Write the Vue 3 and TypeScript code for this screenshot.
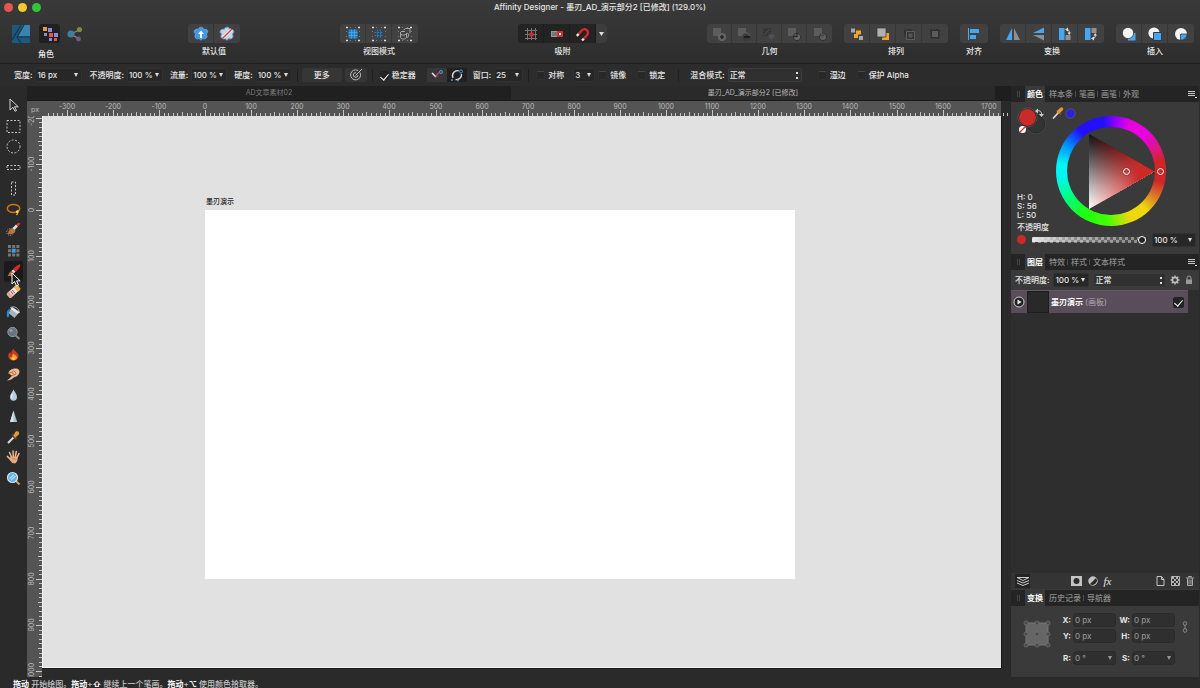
<script setup lang="ts">
import { ref } from 'vue'

interface Tool { name: string; icon: string; active?: boolean }
interface Group { label: string; cls: string; buttons: { name: string; icon: string }[] }

const corners = '<path d="M2 2.500h2M14 2.500h2M2 15.500h2M14 15.500h2" stroke="#ddd" stroke-width="1.400"/><path d="M6 2.500h1M11 2.500h1M6 15.500h1M11 15.500h1M2.500 6v1M15.500 6v1M2.500 11v1M15.500 11v1" stroke="#8a8a8a" stroke-width=".8"/>'
const flower = '<path d="M9 2.200c1.500 0 2.300 1 2.600 2.100 1.200-.2 3.700 0 4.100 1.700.4 1.400-.5 2.300-1.400 3 .7 1.100 1.200 3-.2 4.200-1.200 1-2.400.7-3.500.2-.5 1-1 1.700-1.600 1.700s-1.200-.6-1.700-1.700c-1.100.5-2.300.8-3.500-.2-1.300-1.200-.9-3.100-.2-4.200-.9-.7-1.800-1.600-1.400-3 .5-1.700 2.900-1.900 4.200-1.700C6.700 3.200 7.500 2.200 9 2.200z"'
const geo = (s: string) => `<path d="M3 3h8v8H3z" fill="#5c5c5c"/>${s}`

const icons: Record<string, string> = {
  defAsset: `${flower} fill="#3f97e6" stroke="#69b5f2" stroke-width=".7"/><path d="M9 5.500L12 9h-2v4H8V9H6z" fill="#fff"/>`,
  defClear: `${flower} fill="#c9d3dd" stroke="#5fa8e4" stroke-width="1"/><path d="M5 13L13.500 4.500" stroke="#fff" stroke-width="3"/><path d="M4.500 13.500L14 4" stroke="#d73533" stroke-width="1.500"/>`,
  vm1: `${corners}<path d="M4.500 4.500h9v9h-9z" fill="#277fc4"/><path d="M4.500 7.500h9M4.500 10.500h9M7.500 4.500v9M10.500 4.500v9" stroke="#4fb0ee" stroke-width=".7"/>`,
  vm2: `${corners}<path d="M4.500 4.500h9v9h-9z" fill="#2c485e"/><path d="M4.500 7.500h9M4.500 10.500h9M7.500 4.500v9M10.500 4.500v9" stroke="#4886b4" stroke-width=".7" stroke-dasharray="2 1"/>`,
  vm3: `${corners}<g fill="none" stroke="#a5a5a5" stroke-width="1"><path d="M5 6.500h4M4.500 7v5.500c1 2 5 2 6 0V8M10.500 8.500c3-1 3 4 0 4M7.500 5l2-1.500h4.500v4l-1 1M5 9.500c2 1 4 1 5-.5"/></g>`,
  sn1: '<path d="M3 5.500h12M3 9.500h12M3 13.500h12M5.500 3v12M9.500 3v12M13.500 3v12" stroke="#777" stroke-width="1"/><path d="M7.500 7.500h4v4h-4z" fill="#d52730"/>',
  sn2: '<path d="M3 6h7v6H3z" fill="#999"/><path d="M4 8h5M4 10h5" stroke="#555"/><path d="M9 6h6v6H9z" fill="#d52d35"/><path d="M11 8h2v2h-2z" fill="#fff"/>',
  sn3: '<g transform="rotate(42 9 9)" fill="none"><path d="M5.700 12.500V7a3.500 3.500 0 0 1 7 0v5.500" stroke="#d7282f" stroke-width="2.400"/><path d="M5.700 12v2.500M12.700 12v2.500" stroke="#eee" stroke-width="2.400"/></g>',
  g1: geo('<circle cx="12" cy="12" r="4" fill="#646464"/><path d="M10 12h4M12 10v4" stroke="#262626" stroke-width="1.600"/>'),
  g2: geo('<circle cx="11.500" cy="12" r="4" fill="#3b3b3b"/><path d="M9 12h6" stroke="#1e1e1e" stroke-width="2"/><path d="M10 8a4 4 0 0 1 5 3" stroke="#666" fill="none"/>'),
  g3: '<path d="M3 3h8v8H3z" fill="#37373a"/><path d="M8 11a4 4 0 0 1 7 0l-4 4z" fill="#4d5054"/><path d="M4 10l6-6" stroke="#505052"/>',
  g4: geo('<circle cx="12" cy="12" r="3.700" fill="#686868" stroke="#303030"/><path d="M8 11.500h4V8" stroke="#292929" fill="none" stroke-width="1.300"/>'),
  g5: geo('<circle cx="12" cy="12" r="3.700" fill="#606060" stroke="#333"/><path d="M9.500 9.500h3v3h-3z" fill="#303030"/><path d="M11 8v4M9 12h4" stroke="#777" stroke-width=".7"/>'),
  a1: '<path d="M3 3.500h4v4H3zM11 11h4v4h-4z" fill="#a7a7a7"/><path d="M8 5.500h5v4h-3v3.500H6V9h2z" fill="#f4a429"/>',
  a2: '<path d="M9 8h6v7H8z" fill="#f1a42d"/><path d="M3 3h9v9H3z" fill="#b0b0b0" stroke="#333" stroke-width=".7"/>',
  a3: '<path d="M4 4h8v8H4z" fill="#343434"/><path d="M6.500 6.500h8v8h-8z" fill="#343434" stroke="#5e5e5e"/><path d="M8.500 8.500h4v4h-4z" fill="#555"/>',
  a4: '<path d="M4.500 4.500h9v9h-9z" fill="#2f2f2f"/><path d="M6 6h6v6H6z" fill="#5b5b5b"/>',
  al: '<path d="M3.500 3v12" stroke="#5ba6e2" stroke-width="1"/><path d="M5 4h9v4H5zM5 10h6v4H5z" fill="#49a6ee"/>',
  t1: '<path d="M8 3v12H2z" fill="#48a5ef"/><path d="M10 3v12h6z" fill="#8e8e8e"/>',
  t2: '<path d="M14 2.500V8H3z" fill="#48a5ef"/><path d="M14 15.500V10H3z" fill="#8e8e8e"/>',
  t3: '<path d="M3 3h5.500v12H3z" fill="#48a5ef"/><path d="M9.500 10h5v5h-5z" fill="#929292"/><path d="M10 4.500c3-.5 3.500 1.500 3.200 4" fill="none" stroke="#ddd"/><path d="M9 4.500L12 2.500v4zM11.500 7.500h3.500l-1.800 2.500z" fill="#ddd"/>',
  t4: '<path d="M3 3h5.500v12H3z" fill="#48a5ef"/><path d="M9.500 3h5v5h-5z" fill="#929292"/><path d="M10 13.500c3 .5 3.500-1.500 3.200-4" fill="none" stroke="#ddd"/><path d="M9 13.500l3 2v-4zM11.500 10.500h3.500L13.200 8z" fill="#ddd"/>',
  i1: '<path d="M8 8h7.500v7.500H8z" fill="#48a5ef"/><circle cx="8" cy="8" r="5.600" fill="#f4f4f4" stroke="#333" stroke-width=".7"/>',
  i2: '<circle cx="8" cy="8" r="5.600" fill="#f4f4f4"/><path d="M7.500 7.500h8v8h-8z" fill="#48a5ef" stroke="#2e3b47" stroke-width="1"/>',
  i3: '<circle cx="9" cy="9" r="6" fill="#f4f4f4"/><path d="M8.500 9h6.500a6 6 0 0 1-6.500 6z" fill="#48a5ef" stroke="#2e3b47" stroke-width=".8"/>',

  arrow: '<path d="M6 3v11l3-2.700 2 4 1.500-.8-2-3.700h3.800z" fill="#2c2c2c" stroke="#d5d5d5"/>',
  rectSel: '<path d="M3 3.500h13v12H3z" fill="none" stroke="#c4c4c4" stroke-dasharray="2 1.500"/>',
  ovalSel: '<circle cx="9.500" cy="9.500" r="6.500" fill="none" stroke="#c4c4c4" stroke-dasharray="2 1.500"/>',
  rowSel: '<path d="M3 7.500h13v4H3z" fill="none" stroke="#c4c4c4" stroke-dasharray="2 1.500"/>',
  colSel: '<path d="M7.500 3h4v13h-4z" fill="none" stroke="#c4c4c4" stroke-dasharray="2 1.500"/>',
  lasso: '<ellipse cx="9.500" cy="8.500" rx="6.200" ry="4" fill="none" stroke="#cc751c" stroke-width="1.500"/><path d="M12 12c2.500 0 2 2.500 0 2.500" fill="none" stroke="#e6a42a" stroke-width="1.300"/><circle cx="13.500" cy="11.500" r="1.300" fill="#ffe95a"/>',
  selBrush: '<circle cx="6" cy="12" r="3.300" fill="none" stroke="#aaa" stroke-dasharray="1 1"/><path d="M4 14c0-3 2-5.500 5-6l2.500 2.500c-.5 3-3.500 4-7.500 3.500z" fill="#b8753c"/><path d="M8.500 8L12 4.500 14 6.500 10.500 10z" fill="#dedede"/><path d="M12 4.500l3-2 1.300 1.300-2.300 2.700z" fill="#e23a32"/>',
  grid: '<g fill="#777"><path d="M4 4h3v3H4zM8.200 4h3v3h-3zM12.400 4h3v3h-3zM4 8.200h3v3H4zM12.400 8.200h3v3h-3zM4 12.400h3v3H4zM8.200 12.400h3v3h-3zM12.400 12.400h3v3h-3z"/></g><path d="M7.700 7.700h4v4h-4z" fill="#36a0f3"/>',
  brush: '<path d="M3.500 14c1-1 1.500-4 4-5l2.500 2.500c-1 2.500-4 2.800-6.500 2.500z" fill="#b56a3a"/><path d="M7.500 9l1.800-1.700 2.300 2.300-1.700 1.700z" fill="#ddd"/><path d="M9 7C11 5 13 3.300 15.500 2.200c1.300.5 1 1.800.3 2.900-1 1.600-2.400 3.300-3.900 4.800z" fill="#d8262c"/>',
  eraser: '<g transform="rotate(-42 9.500 9.500)"><rect x="2.500" y="6.500" width="14" height="6" rx="1" fill="#ece9e6"/><path d="M2.500 7.500l1-1H6v6H3.500l-1-1z" fill="#e6a493"/><path d="M12.500 6.500h3l1 1v4l-1 1h-3z" fill="#f0b447"/><path d="M7.500 7.500v4M9.500 7.500v4" stroke="#b7514a"/></g>',
  bucket: '<path d="M8 4l7.500 5-5 6-6-5z" fill="#a8b2ba"/><path d="M8 4l7.500 5-2 2-7-5z" fill="#e2e8ec"/><path d="M6 5c4-3 9 0 9.500 5" fill="none" stroke="#aaa"/><path d="M6.500 6C3 6 2.500 9 3 14c2 1.500 2.500-2 2-4.500z" fill="#2589dc"/>',
  dodge: '<path d="M11 11l4.500 4" stroke="#838a90" stroke-width="1.800"/><circle cx="8.500" cy="8" r="4.700" fill="#69737d" stroke="#8e969e"/><circle cx="7" cy="6.500" r="1.500" fill="#95a0a9"/>',
  burn: '<path d="M9.500 3.500c.5 2.500 4.500 4 5 7C14.700 14 12 15.500 9.500 15.500S4.300 14 4.300 11c0-2 .9-3.500 2.200-4 0 1 .3 1.500 1 1.500C7 6.500 8.500 5 9.500 3.500z" fill="#c93a26"/><path d="M10 8.500c0 1.500 3 2 3 4 0 1.500-1.500 2.700-3.500 2.700S6 14 6 12c.5.500 1.500.5 2 0 0-1.500 1-2.500 2-3.500z" fill="#f0a026"/><circle cx="9.500" cy="13.500" r="1.300" fill="#f8dc3c"/>',
  smudge: '<path d="M4.500 8.500c-.5-4 8-7 10.500-3.500 1.500 3-1 6-4 7-2 .5-3.500 3.500-8 3.500 2-1.500 3.500-3 5-5z" fill="#edba94"/><path d="M4.500 8.500c2-1.500 4-1.500 5 .5M8.500 6.500c1.500-1 3 0 3.500 2M7 11l5-2" fill="none" stroke="#a05e38" stroke-width=".9"/>',
  blur: '<path d="M9.500 3.500c1 2.500 3.500 4.500 3.500 7.500a3.500 3.700 0 0 1-7 0c0-3 2.500-5 3.500-7.500z" fill="#b5cddb"/><path d="M8.500 8c-1 1.500-1.200 3-.5 4.500" stroke="#fff" fill="none"/>',
  sharpen: '<path d="M9.500 3.500l3.700 11.500H6z" fill="#a8c0cc"/><path d="M9.500 3.500V15H6z" fill="#dbe7ec"/>',
  picker: '<path d="M9.500 9.500L4 15" stroke="#d6dbde" stroke-width="2"/><path d="M8 6.500l4.500 4.500" stroke="#69472b" stroke-width="2"/><path d="M9.500 7.500l1.500-3c1-1.700 3.500-1.700 4 0 .5 1-.2 2.500-1.500 3.200l-2.500 2z" fill="#e49a35"/>',
  hand: '<g stroke="#eeb993" stroke-linecap="round" fill="none"><path d="M7.500 9L5.500 4.500M9.300 8.500L9 3M11.300 8.500l1-5M12.800 10l2.200-4.500" stroke-width="1.500"/><path d="M7 12L3.500 8.500" stroke-width="1.700"/></g><path d="M6.500 8.500h7c.5 3-.5 6.500-3 7C7.500 15.500 6 12.500 5.500 11z" fill="#e9aa80"/><path d="M8 11c1.500-.5 3 0 4 .5" fill="none" stroke="#b87652" stroke-width=".7"/>',
  zoom: '<path d="M12 12l3.500 3.500" stroke="#dc9e4a" stroke-width="2"/><circle cx="8.500" cy="8.500" r="5" fill="#5dadea" stroke="#d5e5f0" stroke-width="1.200"/><path d="M5.500 9.500l4.500-4M7 11l4.500-4" stroke="#b6def8" stroke-width="1.200"/>',
}

const groups: Group[] = [
  { label: '默认值', cls: '', buttons: [{ name: '同步默认值', icon: 'defAsset' }, { name: '恢复默认值', icon: 'defClear' }] },
  { label: '视图模式', cls: '', buttons: [{ name: '矢量', icon: 'vm1' }, { name: '像素', icon: 'vm2' }, { name: '轮廓', icon: 'vm3' }] },
  { label: '吸附', cls: 'pressed', buttons: [{ name: '网格', icon: 'sn1' }, { name: '像素对齐', icon: 'sn2' }, { name: '磁吸', icon: 'sn3' }] },
  { label: '几何', cls: 'narrow', buttons: ['g1', 'g2', 'g3', 'g4', 'g5'].map(i => ({ name: '几何 ' + i, icon: i })) },
  { label: '排列', cls: '', buttons: ['a1', 'a2', 'a3', 'a4'].map(i => ({ name: '排列 ' + i, icon: i })) },
  { label: '对齐', cls: '', buttons: [{ name: '对齐', icon: 'al' }] },
  { label: '变换', cls: '', buttons: ['t1', 't2', 't3', 't4'].map(i => ({ name: '变换 ' + i, icon: i })) },
  { label: '插入', cls: '', buttons: ['i1', 'i2', 'i3'].map(i => ({ name: '插入 ' + i, icon: i })) },
]

const tools: Tool[] = [
  { name: '移动', icon: 'arrow' }, { name: '矩形选框', icon: 'rectSel' }, { name: '椭圆选框', icon: 'ovalSel' },
  { name: '行选框', icon: 'rowSel' }, { name: '列选框', icon: 'colSel' }, { name: '套索', icon: 'lasso' },
  { name: '选区画笔', icon: 'selBrush' }, { name: '像素', icon: 'grid' }, { name: '画笔', icon: 'brush', active: true },
  { name: '擦除', icon: 'eraser' }, { name: '填充', icon: 'bucket' }, { name: '减淡', icon: 'dodge' },
  { name: '加深', icon: 'burn' }, { name: '涂抹', icon: 'smudge' }, { name: '模糊', icon: 'blur' },
  { name: '锐化', icon: 'sharpen' }, { name: '拾色器', icon: 'picker' }, { name: '抓手', icon: 'hand' }, { name: '缩放', icon: 'zoom' },
]

const SCALE = 0.461
const range = (from: number, to: number, step: number) =>
  Array.from({ length: Math.floor((to - from) / step) + 1 }, (_, i) => from + i * step)
const hMajor = range(-300, 1700, 100)
const vMajor = range(-200, 1000, 100)
const hx = (v: number) => Math.round(178 + v * SCALE)
const vy = (v: number) => Math.round(94 + v * SCALE)
const hMinor = range(-340, 1740, 10).map(v => `M${hx(v)}.5 ${v % 50 ? 12 : 11}v${v % 50 ? 3 : 4}`).join('')
const vMinor = range(-200, 1010, 10).map(v => `M${v % 50 ? 12 : 11} ${vy(v)}.5h${v % 50 ? 3 : 4}`).join('')

const stabilize = ref(true)
const opacity = ref(100)
</script>

<template>
  <div class="app">
    <header class="chrome">
      <div class="titlebar">
        <div class="lights"><button class="red" aria-label="关闭"></button><button class="yellow" aria-label="最小化"></button><button class="green" aria-label="缩放窗口"></button></div>
        <h1>Affinity Designer - 墨刃_AD_演示部分2 [已修改] (129.0%)</h1>
      </div>
      <div class="toolbar">
        <div class="personas">
          <div class="persona-row">
            <button aria-label="设计">
              <svg width="18" height="18" viewBox="0 0 18 18"><path d="M0 0h18v18H0z" fill="#20587c" /><path d="M8 0h10v11H6l5-11z" fill="#3a83ad" /><path d="M9 0L0 15M12 0L5 12h13M5 12l4 6" stroke="#12374f" stroke-width="1.200" fill="none" /></svg>
            </button>
            <button class="on" aria-label="像素">
              <svg width="18" height="18" viewBox="0 0 18 18"><path d="M2 2h4v4H2z" fill="#f09a3c" /><path d="M7 3h4v4H7zM3 8h3v3H3zM13 8h4v4h-4zM8 13h3v3H8z" fill="#8b8be0" /><path d="M8 8h4v4H8zM13 13h3v3h-3z" fill="#e4574c" /></svg>
            </button>
            <button aria-label="导出">
              <svg width="18" height="18" viewBox="0 0 18 18"><path d="M5 9l8-4M5 9l8 5" stroke="#8a8a8a" stroke-width="1.200" /><circle cx="5" cy="9" r="3.600" fill="#417d9d" /><circle cx="13.500" cy="4.500" r="2.600" fill="#7c8a45" /><circle cx="12.500" cy="14" r="2.400" fill="#6d5a8b" /></svg>
            </button>
          </div>
          <span>角色</span>
        </div>
        <i class="wide"></i>
        <template v-for="g in groups" :key="g.label">
          <div class="group" :class="g.cls">
            <div class="segment">
              <button v-for="b in g.buttons" :key="b.icon" :aria-label="b.name"><svg width="18" height="18" viewBox="0 0 18 18" v-html="icons[b.icon]"></svg></button>
              <button v-if="g.label === '吸附'" class="drop" aria-label="吸附选项"><svg width="5" height="4" viewBox="0 0 5 4"><path d="M0 0h5L2.500 4z" fill="#ddd" /></svg></button>
            </div>
            <span>{{ g.label }}</span>
          </div>
          <i v-if="['默认值', '视图模式', '吸附'].includes(g.label)" class="wide"></i>
        </template>
      </div>
    </header>

    <form class="options" @submit.prevent>
      <label for="w">宽度:</label>
      <span class="combo w47"><select id="w"><option>16 px</option></select></span>
      <label for="op">不透明度:</label>
      <span class="combo w36"><select id="op"><option>100 %</option></select></span>
      <label for="fl">流量:</label>
      <span class="combo w36"><select id="fl"><option>100 %</option></select></span>
      <label for="hd">硬度:</label>
      <span class="combo w36"><select id="hd"><option>100 %</option></select></span>
      <i class="sep"></i>
      <button class="more">更多</button>
      <button class="sq" aria-label="压力"><svg width="14" height="14" viewBox="0 0 14 14" fill="none" stroke="#b8b8b8"><path d="M11 4.500A5 5 0 1 1 9 2.500" /><path d="M9 7a2.300 2.300 0 1 1-2-2.300M6.500 7.500L13 1" /></svg></button>
      <i class="sep"></i>
      <label class="check"><input v-model="stabilize" type="checkbox" />稳定器</label>
      <span class="pair">
        <button aria-label="绳索模式"><svg width="14" height="14" viewBox="0 0 14 14" fill="none"><path d="M2 5l4 4" stroke="#eee" stroke-width="1.500" /><path d="M6 9c1-3 2-4 4-5" stroke="#d63d63" stroke-width="1.300" /><circle cx="11" cy="4" r="1.500" stroke="#4a9ddf" /></svg></button>
        <button class="on" aria-label="窗口模式"><svg width="14" height="14" viewBox="0 0 14 14" fill="none"><path d="M3 10a5 5 0 0 1 6-7M11.500 6a5 5 0 0 1-6 5.500" stroke="#ddd" stroke-width="1.300" /><circle cx="11" cy="3.500" r="1.500" stroke="#4b9be0" /><circle cx="2" cy="12" r="1" fill="#4b9be0" /><circle cx="8" cy="12.500" r="1" fill="#4b9be0" /></svg></button>
      </span>
      <label for="win" class="after">窗口:</label>
      <span class="combo w29"><select id="win"><option>25</option></select></span>
      <i class="sep"></i>
      <label class="check"><input type="checkbox" />对称</label>
      <span class="combo w22"><select aria-label="对称数"><option>3</option></select></span>
      <label class="check tight"><input type="checkbox" />镜像</label>
      <label class="check next"><input type="checkbox" />锁定</label>
      <i class="sep far"></i>
      <label for="bm">混合模式:</label>
      <span class="combo w74 updown"><select id="bm"><option>正常</option></select></span>
      <label class="check apart"><input type="checkbox" />湿边</label>
      <label class="check next"><input type="checkbox" />保护 Alpha</label>
    </form>

    <main class="work">
      <nav class="tools">
        <button v-for="t in tools" :key="t.icon" :aria-label="t.name" :class="{ on: t.active }">
          <svg width="19" height="19" viewBox="0 0 19 19" v-html="icons[t.icon]"></svg>
          <svg v-if="t.active" class="cursor" width="10" height="15" viewBox="0 0 10 15"><path d="M1 1v11l2.600-2.400L5.500 14l2-.9-1.900-4.200h3.600z" fill="#1a1a1a" stroke="#fff" /></svg>
        </button>
      </nav>

      <section class="stage">
        <div class="doctabs">
          <button>AD文章素材02</button>
          <button class="on">墨刃_AD_演示部分2 [已修改]</button>
        </div>
        <div class="hruler">
          <svg height="15" class="rule">
            <path :d="hMinor" stroke="#c2c2c2" />
            <text x="4" y="11">px</text>
            <g v-for="v in hMajor" :key="v"><path :d="`M${hx(v)}.5 9v6`" stroke="#c8c8c8" /><text :x="hx(v)" y="8" text-anchor="middle">{{ v }}</text></g>
          </svg>
        </div>
        <div class="mid">
          <svg class="rule vrule" width="15">
            <path :d="vMinor" stroke="#c2c2c2" />
            <g v-for="v in vMajor" :key="v"><path :d="`M9 ${vy(v)}.5h6`" stroke="#c8c8c8" /><text :transform="`translate(7 ${vy(v)}) rotate(-90)`" text-anchor="middle">{{ v }}</text></g>
          </svg>
          <div class="canvas">
            <div class="artboard"><span>墨刃演示</span></div>
          </div>
        </div>
      </section>

      <aside class="panels">
        <div class="ptabs"><i class="grip"></i><button class="on">颜色</button><button>样本条</button><button>笔画</button><button>画笔</button><button>外观</button>
          <button class="menu" aria-label="菜单"><svg width="9" height="7" viewBox="0 0 9 7"><path d="M0 .5h7M0 2.500h7M0 4.500h7" stroke="#c9c9c9" /><path d="M7 6.500h2" stroke="#eee" /></svg></button></div>
        <div class="color">
          <div class="color-top">
            <div class="info">
              <svg width="60" height="30" viewBox="0 0 60 30">
                <circle cx="20" cy="18" r="9" fill="#333" stroke="#202020" /><circle cx="20" cy="18" r="9.500" fill="none" stroke="#5b5b5b" stroke-width=".5" />
                <circle cx="11.500" cy="11.500" r="9.500" fill="#222" stroke="#666" stroke-width=".6" /><circle cx="11.500" cy="11.500" r="8.500" fill="#cb2a2a" />
                <circle cx="6.500" cy="23.500" r="3.500" fill="#fff" /><path d="M4 26l5-5" stroke="#d52b2b" stroke-width="1.200" />
                <path d="M21 5c3-1 5 1 4.500 4" fill="none" stroke="#ccc" /><path d="M19 5l3-2.500v5zM23 8h5l-2.500 3z" fill="#ccc" />
                <path d="M42.500 6.500L37 12.500" stroke="#ddd" stroke-width="1.700" /><path d="M40.500 4l4.500 4.500" stroke="#7a4d25" stroke-width="1.500" /><path d="M42.500 6L45.500 3" stroke="#e0983c" stroke-width="3.500" stroke-linecap="round" />
                <circle cx="54.500" cy="7.500" r="4.700" fill="#2a22d8" stroke="#5f5f6e" stroke-width=".7" />
              </svg>
              <p class="hsl">H: 0<br />S: 56<br />L: 50</p>
              <label for="alpha">不透明度</label>
            </div>
            <div class="wheel"><div class="hole"><div class="tri"></div></div><i class="knob sl"></i><i class="knob hue"></i></div>
          </div>
          <div class="alpha"><i class="dot"></i><input id="alpha" v-model="opacity" type="range" min="0" max="100" /><span class="combo w44"><select aria-label="不透明度数值"><option>100 %</option></select></span></div>
        </div>

        <div class="ptabs"><i class="grip"></i><button class="on">图层</button><button>特效</button><button>样式</button><button>文本样式</button>
          <button class="menu" aria-label="菜单"><svg width="9" height="7" viewBox="0 0 9 7"><path d="M0 .5h7M0 2.500h7M0 4.500h7" stroke="#c9c9c9" /><path d="M7 6.500h2" stroke="#eee" /></svg></button></div>
        <div class="lopts">
          <label for="lo">不透明度:</label>
          <span class="combo w36"><select id="lo"><option>100 %</option></select></span>
          <span class="combo grow updown"><select aria-label="图层混合模式"><option>正常</option></select></span>
          <button aria-label="设置"><svg width="10" height="10" viewBox="0 0 10 10"><circle cx="5" cy="5" r="2.600" fill="none" stroke="#bbb" stroke-width="1.600" /><path d="M5 .5v2M5 7.500v2M.5 5h2M7.500 5h2M1.800 1.800l1.400 1.400M6.800 6.800l1.400 1.400M8.200 1.800L6.800 3.200M3.200 6.800L1.800 8.200" stroke="#bbb" stroke-width="1.400" /></svg></button>
          <button aria-label="锁定"><svg width="8" height="10" viewBox="0 0 8 10"><path d="M1 4.500h6V9H1z" fill="#999" /><path d="M2 5V3a2 2 0 0 1 4 0v2" fill="none" stroke="#999" /></svg></button>
        </div>
        <ul class="layers">
          <li>
            <button aria-label="展开"><svg width="12" height="12" viewBox="0 0 12 12"><circle cx="6" cy="6" r="5" fill="#222" stroke="#ccc" /><path d="M4.500 3.500v5L8.500 6z" fill="#eee" /></svg></button>
            <i class="thumb"></i><b>墨刃演示</b><span>(画板)</span>
            <input type="checkbox" checked aria-label="可见" />
          </li>
        </ul>
        <div class="lbar">
          <button class="on" aria-label="图层堆栈"><svg width="14" height="11" viewBox="0 0 14 11" fill="none" stroke="#ccc"><path d="M1 1.500h12L7 4.500zM1 4.500l6 2.500 6-2.500M1 7l6 2.500L13 7" /></svg></button>
          <i class="fill"></i>
          <button aria-label="蒙版"><svg width="11" height="10" viewBox="0 0 11 10"><path d="M0 0h11v10H0z" fill="#c4c4c4" /><circle cx="5.500" cy="5" r="3" fill="#2c2c2c" /></svg></button>
          <button aria-label="调整"><svg width="10" height="10" viewBox="0 0 10 10"><circle cx="5" cy="5" r="4.300" fill="#c4c4c4" stroke="#c4c4c4" stroke-width=".8" /><path d="M8 2a4.300 4.300 0 0 1-6 6z" fill="#2a2a2a" /></svg></button>
          <button class="fx">fx</button>
          <i class="fill"></i>
          <button aria-label="新建"><svg width="9" height="10" viewBox="0 0 9 10" fill="none" stroke="#c4c4c4"><path d="M1 .5h4.500l2.500 3v6H1zM5.500.5v3H8" /></svg></button>
          <button aria-label="像素层"><svg width="9" height="10" viewBox="0 0 9 10"><path d="M.5.5h8v9h-8z" fill="none" stroke="#b4b4b4" /><path d="M1 2h7M1 6h7" stroke="#b4b4b4" stroke-width="2" stroke-dasharray="2 2" /><path d="M3 4h5M3 8h5" stroke="#b4b4b4" stroke-width="2" stroke-dasharray="2 2" /></svg></button>
          <button aria-label="删除"><svg width="8" height="10" viewBox="0 0 8 10" fill="none" stroke="#aaa"><path d="M0 2h8M2.500 1.500V.5h3v1M1.500 2.500v7h5v-7M3 3.500v5M5 3.500v5" /></svg></button>
        </div>

        <div class="ptabs last"><i class="grip"></i><button class="on">变换</button><button>历史记录</button><button>导航器</button></div>
        <div class="transform">
          <svg class="anchor" width="28" height="28" viewBox="0 0 28 28"><path d="M3 3h22v22H3z" fill="#666" /><path d="M3 3h22v22H3z" fill="none" stroke="#777" /><g fill="#4a4a4a" stroke="#6e6e6e" stroke-width=".8"><circle v-for="n in 9" :key="n" :cx="3 + ((n - 1) % 3) * 11" :cy="3 + Math.floor((n - 1) / 3) * 11" r="2" /></g></svg>
          <div class="fields">
            <label for="x">X:</label><input id="x" value="0 px" /><label for="wd">W:</label><input id="wd" value="0 px" />
            <label for="y">Y:</label><input id="y" value="0 px" /><label for="ht">H:</label><input id="ht" value="0 px" />
            <label for="r" class="low">R:</label><span class="combo low"><select id="r"><option>0 °</option></select></span>
            <label for="s" class="low">S:</label><span class="combo low"><select id="s"><option>0 °</option></select></span>
          </div>
          <svg class="link" width="6" height="12" viewBox="0 0 6 12" fill="none" stroke="#888"><circle cx="3" cy="2.500" r="1.800" /><path d="M3 4v4" /><circle cx="3" cy="9.500" r="1.800" /></svg>
        </div>
      </aside>
    </main>

    <footer><b>拖动</b> 开始绘图。<b>拖动</b>+<b>⇧</b> 继续上一个笔画。<b>拖动</b>+<b>⌥</b> 使用颜色拾取器。</footer>
  </div>
</template>

<style>
body { margin: 0; background: #2a2a2a; }
</style>

<style scoped>
* { box-sizing: border-box; }
.app { height: 100vh; display: flex; flex-direction: column; overflow: hidden; background: #2a2a2a; color: #e6e6e6; font: 500 8px/12px Inter, "Noto Sans CJK SC", sans-serif; }
button, input, select { font: inherit; color: inherit; border: 0; padding: 0; margin: 0; background: none; }
button { display: flex; align-items: center; justify-content: center; }
svg { display: block; flex: none; }
.chrome { background: linear-gradient(#393939, #353535 40%, #2d2d2d); border-bottom: 1px solid #1f1f1f; height: 64px; flex: none; }
.titlebar { height: 14px; display: grid; grid-template-columns: 1fr auto 1fr; align-items: center; }
.titlebar h1 { margin: 0; font: inherit; }
.lights { display: flex; gap: 5px; padding-left: 4px; }
.lights button { width: 9px; height: 9px; border-radius: 50%; }
.red { background: #e5574f; } .yellow { background: #f2c92e; } .green { background: #35c437; }
.toolbar { display: flex; gap: 12px; padding: 10px 6px 0 8px; }
.toolbar .wide { flex: 1; }
.personas { width: 80px; }
.personas span { padding-left: 30px; }
.persona-row { display: flex; justify-content: space-between; margin-bottom: 5px; }
.persona-row button { width: 26px; height: 19px; }
.persona-row .on { background: #202020; border-radius: 3px; width: 21px; margin-left: 3px; }
.group { text-align: center; }
.segment { display: flex; height: 19px; margin-bottom: 2px; border-radius: 3px; background: #414141; overflow: hidden; }
.segment button { width: 26px; border-right: 1px solid #363636; }
.narrow .segment button { width: 25px; }
.segment button:last-child { border-right: 0; }
.segment button:only-child { width: 28px; }
.pressed .segment { background: #232323; }
.pressed .segment button { border-right-color: #1d1d1d; }
.pressed .segment .drop { width: 11px; background: #3d3d3d; }
.options { flex: none; height: 22px; display: flex; align-items: center; padding-left: 14px; gap: 3px; background: #2c2c2c; }
.combo { position: relative; display: flex; height: 14px; background: #272727; border: 1px solid #313131; border-radius: 2px; }
.combo + label:not(.check) { margin-left: 4px; }
.combo::after { content: ""; position: absolute; right: 3px; top: 4px; border: 2px solid transparent; border-top: 4px solid #ddd; border-bottom: 0; pointer-events: none; }
.combo.updown { background: #303030; border-color: #3c3c3c; }
.combo.updown::after { right: 2px; top: 2px; width: 4px; height: 8px; border: 0; background: linear-gradient(#ddd 0 0) 50% 1px / 2px 2px no-repeat, linear-gradient(#ddd 0 0) 50% 6px / 2px 2px no-repeat; }
.combo select { appearance: none; width: 100%; padding-left: 1px; line-height: 12px; outline: 0; }
.combo option { background: #2a2a2a; }
.w47 { width: 47px; } .w36 { width: 36px; } .w29 { width: 29px; } .w22 { width: 22px; margin-left: 6px; } .w74 { width: 74px; } .w44 { width: 44px; }
.sep { width: 1px; height: 13px; margin: 0 1px 0 2px; background: #1f1f1f; }
.more { width: 40px; height: 14px; background: #363636; border-radius: 2px; }
.sq { width: 22px; height: 14px; background: #363636; border-radius: 2px; }
.pair { display: flex; margin-left: 8px; }
.pair button { width: 20px; height: 14px; background: #373737; }
.pair .on { background: #202020; }
.after { margin-left: 3px; }
.check { display: flex; align-items: center; gap: 3px; margin-left: 3px; }
.check.tight { margin-left: 0; }
.check.next { margin-left: 8px; }
.check.apart { margin-left: 13px; }
.sep.far { margin: 0 8px 0 10px; }
input[type="checkbox"] { appearance: none; width: 9px; height: 9px; border-radius: 2px; background: #282828; border: 1px solid #303030; border-top-color: #474747; display: grid; place-items: center; }
input[type="checkbox"]:checked { border-color: #222; background: #232323; }
input[type="checkbox"]:checked::before { content: ""; width: 4px; height: 7px; margin-bottom: 2px; border: solid #fff; border-width: 0 1px 1px 0; transform: rotate(40deg); }

.work { flex: 1; min-height: 0; display: flex; }
.tools { width: 27px; display: grid; grid-template-rows: repeat(19, 1fr); height: 394px; margin-top: 9px; justify-items: center; }
.tools button { position: relative; width: 19px; }
.tools .on { background: #1a1a1a; border-radius: 2px; }
.cursor { position: absolute; left: 7px; top: 11px; z-index: 2; }
.stage { flex: 1; min-width: 0; display: flex; flex-direction: column; }
.doctabs { height: 15px; display: flex; padding-right: 16px; background: #1e1e1e; color: #7b7b7b; font-size: 7px; }
.doctabs button { flex: 1; background: #202020; border-bottom: 1px solid #191919; font-weight: 400; }
.doctabs .on { background: #2a2a2a; color: #bdbdbd; }
.hruler { height: 15px; margin-right: 10px; background: #545454; flex: none; }
.rule { overflow: visible; font-size: 7px; font-weight: 400; }
.hruler .rule { width: 100%; }
.rule text { fill: #b9b9b9; }
.mid { flex: 1; min-height: 0; display: flex; margin-right: 10px; }
.vrule { background: #545454; height: 100%; overflow: hidden; }
.canvas { position: relative; flex: 1; margin-bottom: 9px; background: #e1e1e1; border: solid #f4f4f4; border-width: 0 0 1px 1px; box-shadow: 1px 1px #181818; overflow: hidden; }
.artboard { position: absolute; left: 162px; top: 94px; width: 590px; height: 369px; background: #fff; color: #222; font-size: 7px; }
.artboard span { position: absolute; left: 1px; top: -14px; }

.panels { width: 189px; display: flex; flex-direction: column; background: #3a3a3a; border-right: 1px solid #2b2b2b; }
.ptabs { height: 16px; flex: none; display: flex; align-items: stretch; background: #242424; color: #8b8b8b; }
.ptabs button { padding: 0 3px; position: relative; line-height: 12px; }
.ptabs button + button:not(.menu):not(.on + button)::before { content: ""; position: absolute; left: -1px; top: 5px; height: 6px; width: 1px; background: #4d4d4d; }
.ptabs .on { background: #393939; color: #fff; font-weight: 700; padding: 0 2px; margin-right: 1px; }
.ptabs .menu { margin-left: auto; padding: 0 2px; }
.grip { width: 3px; height: 6px; margin: 5px 5px 0 6px; border: solid #444; border-width: 0 1px; }
.color { padding: 4px 3px 0 5px; height: 152px; }
.color-top { display: flex; height: 127px; }
.info { width: 40px; display: flex; flex-direction: column; }
.info svg { overflow: visible; }
.hsl { margin: auto 0 0; line-height: 9px; padding-left: 1px; }
.info label { padding-left: 1px; margin-top: 1px; }
.wheel { position: relative; width: 110px; height: 110px; margin: 10px 0 0; border-radius: 50%; background: conic-gradient(from 90deg, #cf2626 0deg 12deg, #d8642e 26deg, #ecd80c 48deg 68deg, #44ff04 94deg, #1eff10 122deg, #00ff80 148deg, #00f5f5 174deg 188deg, #0088ff 212deg, #2410ff 232deg 262deg, #8c00ff 275deg, #e800e0 292deg 314deg, #dc1880 334deg, #cf2626 350deg); }
.hole { position: absolute; inset: 11px; border-radius: 50%; background: #3a3a3a; }
.tri { position: absolute; left: 22px; top: 7px; width: 66px; height: 75px; clip-path: polygon(0 0, 100% 50%, 0 100%); background: linear-gradient(90deg, #cc292900, #cc2929 75%), conic-gradient(from 240deg at 100% 50%, #fff, #111 60deg, #111); }
.knob { position: absolute; width: 7px; height: 7px; border: 1px solid #fff; border-radius: 50%; top: 52px; box-shadow: 0 0 1px #000; }
.sl { left: 67px; } .hue { left: 101px; }
.alpha { display: flex; align-items: center; height: 15px; gap: 4px; margin-top: -1px; }
.alpha .dot { width: 9px; height: 9px; border-radius: 50%; background: #c92a2a; margin-left: 1px; }
.alpha input { appearance: none; flex: 1; min-width: 0; margin: 0 2px; height: 8px; background: linear-gradient(90deg, #e6e6e6, #e6e6e680 35%, #35353500 95%) 0 50% / 100% 5px no-repeat, repeating-conic-gradient(#8b8b8b 0 25%, #404040 0 50%) 0 50% / 6px 6px repeat-x; border-radius: 3px; }
.alpha input::-webkit-slider-thumb { appearance: none; width: 8px; height: 8px; border: 1px solid #fff; border-radius: 50%; background: #222; }
.lopts { height: 20px; flex: none; display: flex; align-items: center; gap: 4px; padding: 0 5px 0 4px; }
.grow { flex: 1; }
.lopts button { width: 10px; }
.layers { flex: 1; min-height: 0; margin: 0; padding: 0 11px 0 0; list-style: none; background: #2e2e2e; }
.layers li { height: 23px; display: flex; align-items: center; gap: 2px; padding: 0 4px 0 2px; background: #584d59; border-top: 1px solid #625763; }
.thumb { width: 22px; height: 22px; background: #292929; border: 1px solid #1d1d1d; }
.layers b { color: #fff; }
.layers li span { color: #b1a9b2; font-weight: 400; flex: 1; }
.layers input { width: 11px; height: 11px; }
.lbar { height: 16px; flex: none; display: flex; align-items: center; gap: 6px; padding: 0 5px 0 4px; background: #343434; }
.lbar .on { background: #242424; width: 15px; height: 14px; }
.lbar .fill { flex: 1; }
.fx { font: italic 11px/12px "Liberation Serif", serif; margin-right: 4px; }
.ptabs.last { margin-top: 1px; }
.transform { flex: none; height: 71px; display: flex; align-items: flex-start; padding: 7px 11px 0 12px; gap: 10px; }
.anchor { margin-top: 7px; }
.fields { display: grid; grid-template-columns: 10px 1fr 12px 1fr; gap: 2px; flex: 1; }
.fields label { text-align: right; font-weight: 700; line-height: 14px; }
.fields input, .fields .combo { min-width: 0; width: 100%; height: 14px; border: 1px solid #2b2b2b; border-radius: 3px; background: #2f2f2f; color: #909090; padding-left: 1px; }
.fields .combo { padding: 0; }
.fields .combo::after { border-top-color: #999; }
.fields .combo + label { margin-left: 0; }
.fields .low { margin-top: 6px; }
.link { margin: 8px 0 0 -3px; }
footer { height: 11px; flex: none; padding-left: 13px; line-height: 15px; color: #c4c4c4; font-family: Inter, "Noto Sans CJK SC", "DejaVu Sans", sans-serif; overflow: hidden; white-space: nowrap; }
footer b { color: #fff; }
</style>
